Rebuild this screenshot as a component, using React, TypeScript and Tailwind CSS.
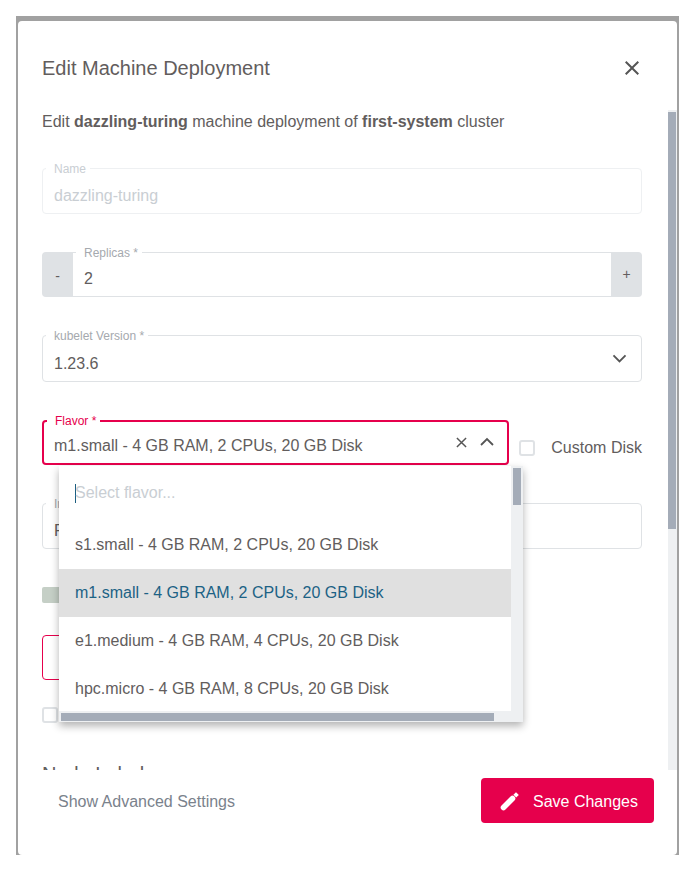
const flavors = [
  { name: "s1.small - 4 GB RAM, 2 CPUs, 20 GB Disk" },
  { name: "m1.small - 4 GB RAM, 2 CPUs, 20 GB Disk", selected: true },
  { name: "e1.medium - 4 GB RAM, 4 CPUs, 20 GB Disk" },
  { name: "hpc.micro - 4 GB RAM, 8 CPUs, 20 GB Disk" },
]

function FieldLabel({ children, className = "" }: { children: string; className?: string }) {
  return (
    <span className={`absolute top-[-7px] left-[3px] bg-white pl-2 pr-[4px] text-[12px] leading-[14px] ${className}`}>
      {children}
    </span>
  )
}

function FlavorDropdown() {
  return (
    <div className="absolute left-[17px] top-[46px] z-10 flex h-[256px] w-[464px] flex-col bg-white shadow-[0_4px_8px_rgba(0,0,0,0.3)]">
      <div className="flex min-h-0 flex-1">
        <div className="flex-1 overflow-hidden">
          <div className="flex h-[55px] items-center pb-[1px] pl-4 text-[16px] text-[#c9ced3]">
            <span className="mr-[-1px] h-[19px] w-px bg-[#1d5f80]"></span>
            Select flavor...
          </div>
          {flavors.map((f) => (
            <div
              key={f.name}
              className={`flex h-12 items-center pl-4 text-[16px] ${f.selected ? "bg-[#e0e0e0] text-[#1c6285]" : "text-[#625d5d]"}`}
            >
              {f.name}
            </div>
          ))}
        </div>
        <div className="w-3 bg-[#eef0f2] pl-[2px] pt-[2px]">
          <div className="h-[37px] w-2 bg-[#a4acb8]"></div>
        </div>
      </div>
      <div className="flex h-[11px] items-center bg-[#eef0f2] pl-[2px]">
        <div className="h-2 w-[433px] bg-[#a4acb8]"></div>
      </div>
    </div>
  )
}

export default function App() {
  return (
    <div className="h-[869px] bg-white pt-4 pl-4 font-['Liberation_Sans',sans-serif]">
      <div className="h-[839px] w-[663px] bg-[#a1a1a1] px-[2px] pt-[5px]">
        <div className="flex h-[834px] flex-col rounded-[4px] bg-white">
          <div className="flex h-[89px] items-center justify-between pl-6 pr-[33px] pt-[5px]">
            <h2 className="text-[20px] text-[#625d5d]">Edit Machine Deployment</h2>
            <svg width="24" height="24" viewBox="0 0 24 24" fill="#555">
              <path d="M19 6.41 17.59 5 12 10.59 6.41 5 5 6.41 10.59 12 5 17.59 6.41 19 12 13.41 17.59 19 19 17.59 13.41 12z" />
            </svg>
          </div>

          <div className="flex h-[660px] overflow-hidden">
            <div className="w-[650px] shrink-0 pl-6 pr-[26px]">
              <p className="mt-[2px] text-[16px] leading-[19px] text-[#625d5d]">
                Edit <b className="font-bold">dazzling-turing</b> machine deployment of{" "}
                <b className="font-bold">first-system</b> cluster
              </p>

              <div className="relative mt-[37px] flex h-[46px] items-center rounded-[4px] border border-[#eef0f2] pl-[11px] pt-[9px] text-[16px] text-[#c9ced3]">
                <FieldLabel className="text-[#c9ced3]">Name</FieldLabel>
                dazzling-turing
              </div>

              <div className="mt-[38px] flex h-[45px]">
                <div className="flex w-[31px] items-center justify-center rounded-l-[4px] bg-[#dfe2e5] pt-1 text-[14px] text-[#625d5d]">
                  -
                </div>
                <div className="relative flex flex-1 items-center border-y border-[#dfe2e5] pl-[11px] pt-[9px] text-[16px] text-[#625d5d]">
                  <FieldLabel className="text-[#a5a9ae]">Replicas *</FieldLabel>
                  2
                </div>
                <div className="flex w-[31px] items-center justify-center rounded-r-[4px] bg-[#dfe2e5] pb-[1px] text-[14px] text-[#625d5d]">
                  +
                </div>
              </div>

              <div className="relative mt-[38px] flex h-[47px] items-center justify-between rounded-[4px] border border-[#dfe2e5] pl-[11px] pr-[13px] text-[16px] text-[#625d5d]">
                <FieldLabel className="text-[#a5a9ae]">kubelet Version *</FieldLabel>
                <span className="pt-[11px]">1.23.6</span>
                <svg className="mb-[1px]" width="17" height="17" viewBox="0 0 24 24" fill="none" stroke="#555" strokeWidth="2.6">
                  <path d="M3.5 7.5 12 16l8.5-8.5" />
                </svg>
              </div>

              <div className="relative mt-[38px] flex h-[46px] items-start">
                <div className="relative flex h-[45px] w-[468px] items-center justify-between rounded-[4px] border-2 border-[#e6004c] pl-[10px] pr-[13px] text-[16px] text-[#625d5d]">
                  <FieldLabel className="top-[-8px] left-[1px] text-[#e6004c]">Flavor *</FieldLabel>
                  <span className="pt-[7px]">m1.small - 4 GB RAM, 2 CPUs, 20 GB Disk</span>
                  <span className="mb-[3px] flex items-center gap-[13px]">
                    <svg className="mt-[2px]" width="11" height="11" viewBox="0 0 12 12" fill="none" stroke="#555" strokeWidth="1.6">
                      <path d="M1 1l10 10M11 1 1 11" />
                    </svg>
                    <svg width="14" height="9" viewBox="0 0 14 9" fill="none" stroke="#555" strokeWidth="1.8">
                      <path d="M1 8l6-6 6 6" />
                    </svg>
                  </span>
                </div>
                <span className="ml-[10px] mt-[20px] h-4 w-4 rounded-[3px] border-2 border-[#dfe2e5]"></span>
                <span className="ml-4 mt-4 whitespace-nowrap text-[16px] text-[#625d5d]">Custom Disk</span>
                <FlavorDropdown />
              </div>

              <div className="relative mt-[37px] flex h-[46px] items-center rounded-[4px] border border-[#dfe2e5] pl-[11px] pt-[9px] text-[16px] text-[#625d5d]">
                <FieldLabel className="text-[#a5a9ae]">Image *</FieldLabel>
                Flatcar
              </div>

              <div className="mt-[38px] h-4 w-[100px] rounded-[2px] bg-[#c5cfc6]"></div>

              <div className="mt-8 h-[45px] w-[200px] rounded-[4px] border border-[#e6004c]"></div>

              <div className="mt-[27px] h-4 w-4 rounded-[3px] border-2 border-[#dfe2e5]"></div>

              <h3 className="mt-[36px] text-[20px] text-[#625d5d]">Node Labels</h3>
            </div>
            <div className="flex-1 bg-[#eef0f2] pt-[2px]">
              <div className="h-[417px] w-[8px] bg-[#a4acb8]"></div>
            </div>
          </div>

          <div className="flex flex-1 items-start justify-between pt-2 pl-10 pr-[23px]">
            <span className="mt-3 text-[16px] text-[#7a828c]">Show Advanced Settings</span>
            <button className="flex h-[45px] w-[173px] items-center gap-[11px] rounded-[4px] bg-[#e6004c] pl-[17px] pt-[2px] text-[16px] text-white">
              <svg className="mb-[2px]" width="24" height="24" viewBox="0 0 24 24" fill="none" stroke="#fff">
                <path d="M5.5 18.5 14.5 9.5" strokeWidth="5.6" strokeLinecap="round" />
                <path d="M16.8 7.2 19.4 4.6" strokeWidth="4" />
              </svg>
              Save Changes
            </button>
          </div>
        </div>
      </div>
    </div>
  )
}
